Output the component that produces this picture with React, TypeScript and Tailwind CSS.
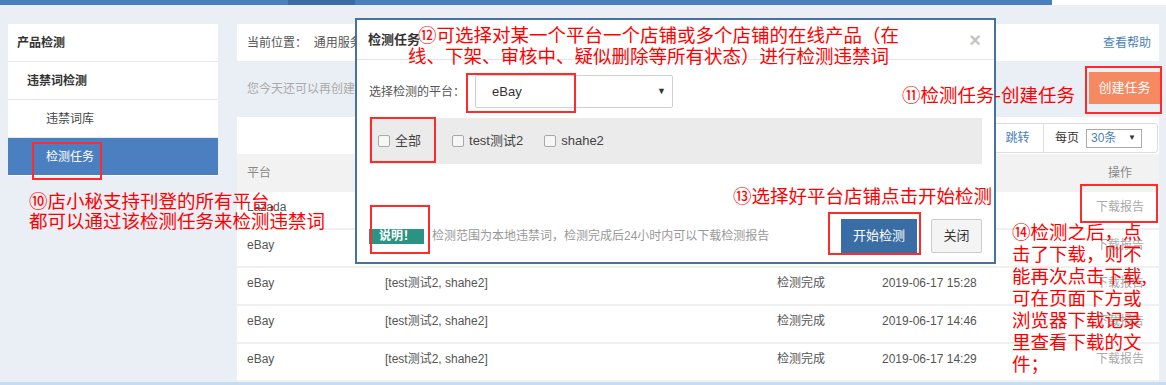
const uiFont = "font-['Liberation_Sans','Noto_Sans_CJK_SC',sans-serif]";
const noteFont = "font-['Noto_Sans_CJK_SC',sans-serif]";

type Row = {
  platform: string;
  shops: string;
  status: string;
  time: string;
};

const rows: Row[] = [
  { platform: "Lazada", shops: "[test测试2, shahe2]", status: "检测完成", time: "2019-06-17 16:02" },
  { platform: "eBay", shops: "[test测试2, shahe2]", status: "检测完成", time: "2019-06-17 15:40" },
  { platform: "eBay", shops: "[test测试2, shahe2]", status: "检测完成", time: "2019-06-17 15:28" },
  { platform: "eBay", shops: "[test测试2, shahe2]", status: "检测完成", time: "2019-06-17 14:46" },
  { platform: "eBay", shops: "[test测试2, shahe2]", status: "检测完成", time: "2019-06-17 14:29" },
];

const sideItems = [
  { label: "产品检测", indent: "pl-[9px] font-bold text-[#333]" },
  { label: "违禁词检测", indent: "pl-[19px] font-bold text-[#333]" },
  { label: "违禁词库", indent: "pl-[38px] text-[#444]" },
];

function Checkbox({ label, className }: { label: string; className?: string }) {
  return (
    <label className={`flex items-center gap-[5px] text-[13px] text-[#444] ${className ?? ""}`}>
      <span className="h-[12px] w-[12px] rounded-[2px] border border-[#a9a9a9] bg-[#f6f6f6]" />
      {label}
    </label>
  );
}

function RedBox({ className }: { className: string }) {
  return <div className={`pointer-events-none absolute border-2 border-[#ff2b2b] ${className}`} />;
}

function TaskModal() {
  return (
    <div className="absolute left-[355px] top-[18px] flex h-[246px] w-[641px] flex-col border-2 border-[#45729f] bg-white">
      <div className="flex h-[40px] shrink-0 items-center justify-between border-b border-[#e6e6e6] pl-[11px] pr-[13px]">
        <span className="text-[13px] font-bold text-[#333]">检测任务</span>
        <span className="text-[20px] font-bold leading-none text-[#c4c4c4]">×</span>
      </div>
      <div className="flex flex-1 flex-col px-[12px]">
        <div className="mt-[15px] flex h-[33px] items-center">
          <span className="w-[106px] text-[12px] text-[#555]">选择检测的平台：</span>
          <div className="flex h-[33px] w-[198px] items-center justify-between rounded-[2px] border border-[#cfcfcf] pl-[16px] pr-[6px]">
            <span className="text-[13px] text-[#333]">eBay</span>
            <span className="text-[9px] text-[#333]">▼</span>
          </div>
        </div>
        <div className="mt-[10px] flex h-[46px] items-center bg-[#ebebeb] pl-[9px]">
          <Checkbox label="全部" />
          <Checkbox label="test测试2" className="ml-[31px]" />
          <Checkbox label="shahe2" className="ml-[21px]" />
        </div>
        <div className="mt-[55px] flex h-[34px] items-center">
          <span className="h-[15px] w-[55px] bg-[#2b9383] pl-[10px] text-[12px] font-bold leading-[15px] text-white">
            说明！
          </span>
          <span className="ml-[8px] text-[12px] text-[#999]">
            检测范围为本地违禁词，检测完成后24小时内可以下载检测报告
          </span>
          <button className="ml-auto h-[34px] w-[76px] bg-[#3a6da6] text-[13px] text-white" type="button">
            开始检测
          </button>
          <button
            className="ml-[14px] h-[34px] w-[51px] rounded-[2px] border border-[#cccccc] bg-[#f4f4f4] text-[13px] text-[#333]"
            type="button"
          >
            关闭
          </button>
        </div>
      </div>
    </div>
  );
}

export default function App() {
  return (
    <div className={`relative flex h-[385px] w-[1166px] flex-col overflow-hidden bg-[#eaeef5] ${uiFont}`}>
      <div className="flex h-[5px] shrink-0">
        <div className="w-[288px] bg-[#4a80bd]" />
        <div className="w-[67px] bg-[#3b6aa6]" />
        <div className="w-[697px] bg-[#4a80bd]" />
        <div className="flex-1 bg-white" />
      </div>

      <div className="flex min-h-0 flex-1 gap-[19px] pl-[8px] pt-[19px]">
        <aside className="flex h-[152px] w-[210px] flex-col bg-white">
          {sideItems.map((item) => (
            <div
              className={`flex h-[38px] items-center border-b border-[#e4e7ec] text-[12px] ${item.indent}`}
              key={item.label}
            >
              {item.label}
            </div>
          ))}
          <div className="flex h-[37px] items-center bg-[#4a80bf] pl-[38px] text-[12px] text-white">检测任务</div>
        </aside>

        <main className="flex w-[922px] flex-col">
          <div className="flex h-[37px] shrink-0 items-center justify-between bg-white pl-[10px] pr-[8px] text-[12px]">
            <span className="text-[#555]">当前位置：&nbsp; 通用服务 &gt; 产品检测 &gt; 检测任务</span>
            <span className="text-[#4a7fbf]">查看帮助</span>
          </div>

          <div className="flex h-[56px] shrink-0 items-center justify-between pl-[10px]">
            <span className="text-[12px] text-[#aaa]">您今天还可以再创建 10 个检测任务</span>
            <button className="-mr-[1px] mb-[3px] h-[32px] w-[71px] bg-[#f58a62] text-[13px] text-white" type="button">
              创建任务
            </button>
          </div>

          <div className="flex flex-1 flex-col bg-white">
            <div className="flex h-[37px] shrink-0 items-start justify-end pr-[1px] pt-[6px]">
              <div className="flex h-[30px] items-center rounded-[3px] border border-[#dddddd] text-[12px]">
                <span className="flex h-full w-[52px] items-center justify-center border-r border-[#dddddd] text-[#4a7fbf]">
                  跳转
                </span>
                <span className="ml-[11px] text-[#333]">每页</span>
                <span className="ml-[7px] mr-[15px] flex h-[19px] w-[56px] items-center justify-between border border-[#aaa] pl-[4px] pr-[5px] text-[#4a7fbf]">
                  30条<span className="text-[8px] text-[#333]">▼</span>
                </span>
              </div>
            </div>

            <div className="grid h-[38px] shrink-0 grid-cols-[138px_392px_105px_1fr_78px] items-center bg-[#f2f2f2] pl-[10px] text-[12px] text-[#888]">
              <span>平台</span>
              <span>店铺</span>
              <span>状态</span>
              <span>检测时间</span>
              <span className="text-center">操作</span>
            </div>

            {rows.map((row) => (
              <div
                className="grid h-[38px] grid-cols-[138px_392px_105px_1fr_78px] items-start border-b-2 border-[#f0f0f0] pl-[10px] pt-[6px] text-[12px] text-[#555]"
                key={row.time}
              >
                <span>{row.platform}</span>
                <span>{row.shops}</span>
                <span>{row.status}</span>
                <span>{row.time}</span>
                <span className="text-center text-[#aaa]">下载报告</span>
              </div>
            ))}
          </div>
        </main>
      </div>

      <div className="h-[3px] shrink-0 bg-[#c6dcf3]" />

      <TaskModal />

      <div className={`absolute left-[29px] top-[190px] text-[18.5px] leading-[20px] text-[#ff0000] ${noteFont}`}>
        <div>⑩店小秘支持刊登的所有平台,</div>
        <div>都可以通过该检测任务来检测违禁词</div>
      </div>
      <div className={`absolute left-[902px] top-[83px] whitespace-nowrap text-[18.5px] leading-[22px] text-[#ff0000] ${noteFont}`}>
        ⑪检测任务-创建任务
      </div>
      <div className={`absolute left-[408px] top-[24px] whitespace-nowrap text-[18.5px] leading-[21px] text-[#ff0000] ${noteFont}`}>
        <div className="pl-[10px]">⑫可选择对某一个平台一个店铺或多个店铺的在线产品（在</div>
        <div>线、下架、审核中、疑似删除等所有状态）进行检测违禁词</div>
      </div>
      <div className={`absolute left-[733px] top-[184px] whitespace-nowrap text-[18.5px] leading-[22px] text-[#ff0000] ${noteFont}`}>
        ⑬选择好平台店铺点击开始检测
      </div>
      <div className={`absolute left-[1012px] top-[220px] whitespace-nowrap text-[18.5px] leading-[22px] text-[#ff0000] ${noteFont}`}>
        <div>⑭检测之后，点</div>
        <div>击了下载，则不</div>
        <div>能再次点击下载,</div>
        <div>可在页面下方或</div>
        <div>浏览器下载记录</div>
        <div>里查看下载的文</div>
        <div>件；</div>
      </div>

      <RedBox className="left-[32px] top-[142px] h-[38px] w-[70px]" />
      <RedBox className="left-[466px] top-[73px] h-[40px] w-[110px]" />
      <RedBox className="left-[370px] top-[117px] h-[46px] w-[66px]" />
      <RedBox className="left-[370px] top-[205px] h-[49px] w-[60px]" />
      <RedBox className="left-[828px] top-[212px] h-[43px] w-[93px]" />
      <RedBox className="left-[1085px] top-[66px] h-[48px] w-[77px]" />
      <RedBox className="left-[1080px] top-[184px] h-[39px] w-[78px]" />
    </div>
  );
}
